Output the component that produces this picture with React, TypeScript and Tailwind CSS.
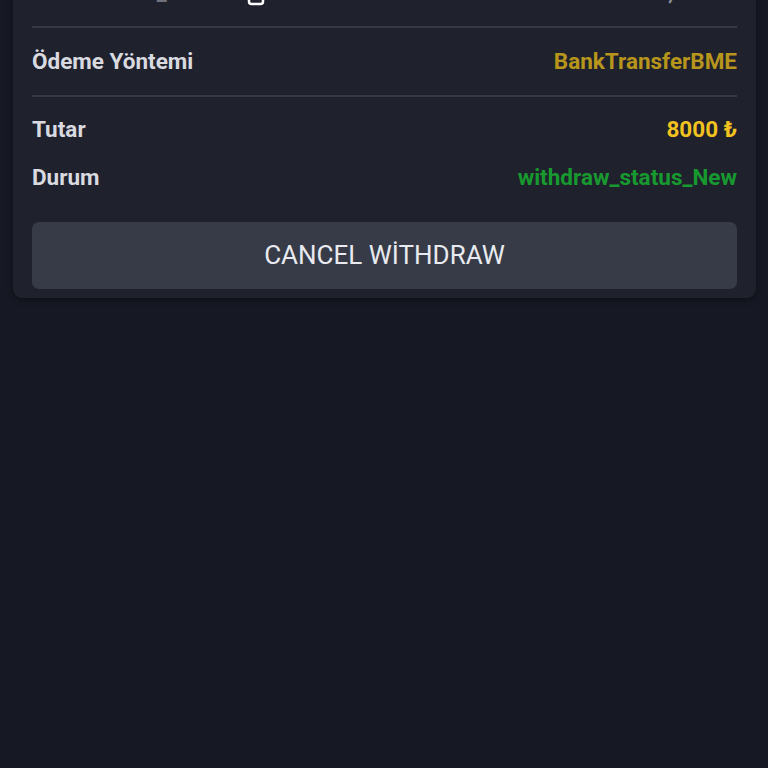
import React from "react";

function CopyIcon() {
  return (
    <svg width="18" height="28" viewBox="0 0 18 28" fill="none" className="shrink-0">
      <rect x="2" y="10" width="14" height="15" rx="2.5" stroke="#ffffff" strokeWidth="2.5" />
    </svg>
  );
}

export default function App() {
  return (
    <div
      className="flex h-[768px] w-full flex-col overflow-hidden bg-[#161823]"
      style={{ fontFamily: "Roboto, 'Noto Sans', 'Liberation Sans', sans-serif" }}
    >
      <div className="-mt-[41px] ml-[13px] mr-[12px] rounded-b-[9px] bg-[#1f212c] px-[19px] pb-[9px] shadow-[0_2px_6px_rgba(0,0,0,0.35)]">
        <div className="flex h-[67px] items-center justify-between text-[22.5px] font-bold">
          <div className="flex items-center">
            <span className="text-[#6f727d]">Referans No_</span>
            <div className="ml-[80px]">
              <CopyIcon />
            </div>
          </div>
          <span className="text-[#8a8d97]">24.05.2024, 14:35</span>
        </div>
        <div className="h-[2px] bg-[#363945]" />
        <div className="flex h-[67px] items-center justify-between text-[22.5px] font-bold">
          <span className="text-[#d9dae0]">Ödeme Yöntemi</span>
          <span className="text-[#b8961c]">BankTransferBME</span>
        </div>
        <div className="h-[2px] bg-[#363945]" />
        <div className="flex flex-col pt-[9px]">
          <div className="flex h-[48px] items-center justify-between text-[22.5px] font-bold">
            <span className="text-[#d9dae0]">Tutar</span>
            <span className="text-[#f2c21e]">8000 ₺</span>
          </div>
          <div className="flex h-[48px] items-center justify-between text-[22.5px] font-bold">
            <span className="text-[#d9dae0]">Durum</span>
            <span className="text-[#18992f]">withdraw_status_New</span>
          </div>
        </div>
        <button className="mt-[20px] flex h-[67px] w-full items-center justify-center rounded-[7px] bg-[#363b47] text-[26px] font-normal text-[#e8eaef]">
          CANCEL WİTHDRAW
        </button>
      </div>
    </div>
  );
}
